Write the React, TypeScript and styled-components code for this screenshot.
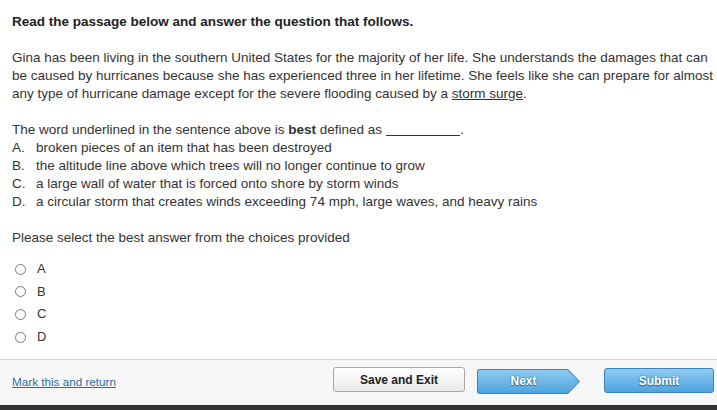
import React from "react";
import styled, { createGlobalStyle } from "styled-components";

const Global = createGlobalStyle`
  html, body { margin: 0; padding: 0; background: #fff; }
  body { font-family: "Liberation Sans", Arial, sans-serif; color: #333; }
`;

const Page = styled.div`
  width: 717px;
  height: 410px;
  display: flex;
  flex-direction: column;
  overflow: hidden;
`;

const Content = styled.div`
  flex: 1;
  padding: 13px 0 0 12px;
  font-size: 13.5px;
  line-height: 18px;
`;

const Heading = styled.div`
  font-weight: bold;
  color: #222;
`;

const Passage = styled.p`
  margin: 18px 0 0;
  padding-right: 2px;
`;

const Under = styled.span`
  text-decoration: underline;
`;

const Question = styled.div`
  margin-top: 18px;
`;

const Blank = styled.span`
  display: inline-block;
  width: 74px;
  border-bottom: 1px solid #333;
  margin-left: 4px;
  height: 14px;
  vertical-align: top;
`;

const Choice = styled.div`
  display: grid;
  grid-template-columns: 24px 1fr;
`;

const Prompt = styled.div`
  margin-top: 18px;
`;

const RadioList = styled.div`
  margin-top: 11px;
  display: flex;
  flex-direction: column;
`;

const RadioRow = styled.label`
  display: flex;
  align-items: center;
  height: 22.6px;
  padding-left: 3px;
  font-size: 13px;
`;

const Circle = styled.span`
  width: 9px;
  height: 9px;
  border: 1px solid #777;
  border-radius: 50%;
  background: #fff;
  margin-right: 11px;
`;

const Footer = styled.div`
  height: 46px;
  box-sizing: border-box;
  border-top: 1px solid #d6d6d6;
  background: #f7f7f7;
  display: flex;
  align-items: flex-start;
  padding: 7px 3px 0 12px;
`;

const Link = styled.a`
  color: #2a6f9c;
  text-decoration: underline;
  font-size: 11.7px;
  margin-right: auto;
  margin-top: 8px;
`;

const SaveButton = styled.button`
  width: 132px;
  height: 25px;
  border: 1px solid #a9a9a9;
  border-radius: 3px;
  background: linear-gradient(#ffffff, #e9e9e9);
  font-family: "Liberation Sans", Arial, sans-serif;
  font-weight: bold;
  font-size: 12px;
  color: #222;
  margin-right: 12px;
  padding: 0;
`;

const NextOuter = styled.div`
  width: 103px;
  height: 25px;
  margin-top: 2px;
  margin-right: 24px;
  background: #3b82bd;
  border-radius: 3px 0 0 3px;
  clip-path: polygon(0 0, calc(100% - 12px) 0, 100% 50%, calc(100% - 12px) 100%, 0 100%);
  position: relative;
`;

const NextInner = styled.div`
  position: absolute;
  inset: 1px;
  border-radius: 2px 0 0 2px;
  background: linear-gradient(#8fcbf2, #4fa4de);
  clip-path: polygon(0 0, calc(100% - 11.5px) 0, 100% 50%, calc(100% - 11.5px) 100%, 0 100%);
  display: flex;
  align-items: center;
  justify-content: center;
  padding: 0 10px 1px 0;
  box-sizing: border-box;
  color: #fff;
  font-weight: bold;
  font-size: 12px;
  text-shadow: 0 0 2px #2d6a9c, 0 1px 1px #2d6a9c;
`;

const SubmitButton = styled.button`
  width: 110px;
  height: 25px;
  border: 1px solid #3b82bd;
  border-radius: 3px;
  background: linear-gradient(#8fcbf2, #4fa4de);
  font-family: "Liberation Sans", Arial, sans-serif;
  font-weight: bold;
  font-size: 12px;
  color: #fff;
  text-shadow: 0 0 2px #2d6a9c, 0 1px 1px #2d6a9c;
  padding: 0;
  margin-top: 1px;
`;

const Bottom = styled.div`
  height: 5px;
  background: #333;
`;

const choices = [
  ["A.", "broken pieces of an item that has been destroyed"],
  ["B.", "the altitude line above which trees will no longer continue to grow"],
  ["C.", "a large wall of water that is forced onto shore by storm winds"],
  ["D.", "a circular storm that creates winds exceeding 74 mph, large waves, and heavy rains"],
];

export default function App() {
  return (
    <Page>
      <Global />
      <Content>
        <Heading>Read the passage below and answer the question that follows.</Heading>
        <Passage>
          Gina has been living in the southern United States for the majority of her life. She understands the damages that can be caused by hurricanes because she has experienced three in her lifetime. She feels like she can prepare for almost any type of hurricane damage except for the severe flooding caused by a <Under>storm surge</Under>.
        </Passage>
        <Question>
          The word underlined in the sentence above is <b>best</b> defined as<Blank />.
        </Question>
        {choices.map(([l, t]) => (
          <Choice key={l}>
            <span>{l}</span>
            <span>{t}</span>
          </Choice>
        ))}
        <Prompt>Please select the best answer from the choices provided</Prompt>
        <RadioList>
          {["A", "B", "C", "D"].map((l) => (
            <RadioRow key={l}>
              <Circle />
              {l}
            </RadioRow>
          ))}
        </RadioList>
      </Content>
      <Footer>
        <Link href="#">Mark this and return</Link>
        <SaveButton>Save and Exit</SaveButton>
        <NextOuter>
          <NextInner>Next</NextInner>
        </NextOuter>
        <SubmitButton>Submit</SubmitButton>
      </Footer>
      <Bottom />
    </Page>
  );
}
